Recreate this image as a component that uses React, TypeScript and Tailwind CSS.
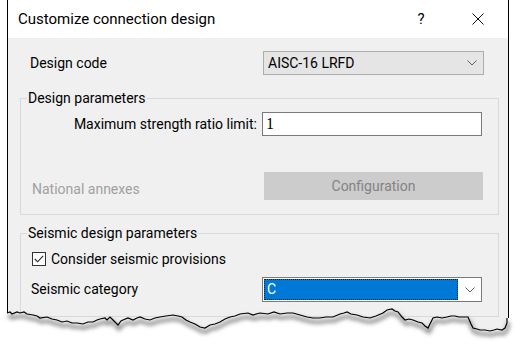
const font = { fontFamily: 'Roboto, "Noto Sans", sans-serif' };

const edge =
  "7,313 10,312 12,314 17,312 20,313 24,312 27,314 33,315 37,316 40,318 47,317 52,319 57,320 62,322 67,321 72,323 77,323 83,324 88,322 93,322 97,320 100,319 105,318 107,320 110,317 113,320 115,322 118,325 121,321 123,320 128,318 133,320 137,318 140,317 145,319 150,320 155,318 160,317 166,316 173,315 178,316 182,317 186,320 190,322 195,324 200,327 205,328 210,325 215,324 220,322 225,319 230,317 235,316 240,314 248,313 253,315 260,313 268,314 274,312 280,314 287,313 293,313 300,315 307,317 313,318 320,318 326,317 333,317 340,314 344,313 347,312 351,314 357,315 363,317 370,318 376,316 383,313 387,310 392,309 395,311 398,312 402,317 405,320 409,319 413,320 418,322 422,323 425,326 428,328 431,322 433,318 437,317 442,318 447,317 451,316 455,316 459,317 463,317 468,317 471,324 473,328 477,329 480,330 485,330 490,331 494,330 497,329 502,330 505,328 507,323 507,318";

function Chevron() {
  return (
    <svg width="10" height="6" viewBox="0 0 10 6" className="shrink-0">
      <polyline points="0.5,0.5 5,5 9.5,0.5" fill="none" stroke="#606060" strokeWidth="1" />
    </svg>
  );
}

export default function App() {
  return (
    <div className="relative w-[517px] h-[355px] bg-white overflow-hidden text-black" style={font}>
      <div className="ml-[7px] w-[502px] h-[345px] border-x border-black bg-[#f0f0f0] flex flex-col">
        {/* title bar */}
        <div className="h-[38px] bg-white flex items-center pl-[10px] text-[15px] shrink-0">
          <span className="flex-1">Customize connection design</span>
          <span className="w-[20px] text-center mr-[41px] text-[15px]">?</span>
          <svg width="12" height="12" viewBox="0 0 12 12" className="mr-[24px]">
            <path d="M0.5 0.5 L11.5 11.5 M11.5 0.5 L0.5 11.5" stroke="#111" strokeWidth="1" />
          </svg>
        </div>

        <div className="pl-[12px] pr-[9px] text-[14px] flex flex-col">
          {/* design code */}
          <div className="mt-[13px] h-[24px] flex items-center">
            <span className="flex-1 pl-[10px]">Design code</span>
            <div className="w-[221px] h-[24px] mr-[15px] bg-[#e5e5e5] border border-[#adadad] flex items-center pl-[4px] pr-[6px]">
              <span className="flex-1">AISC-16 LRFD</span>
              <Chevron />
            </div>
          </div>

          {/* design parameters */}
          <fieldset className="mt-[13px] border border-[#d9d9d9] pb-[14px]">
            <legend className="ml-[6px] px-[1px] leading-[20px]">Design parameters</legend>
            <div className="mt-[4px] h-[24px] flex items-center">
              <span className="w-[241px] text-right pr-[5px]">Maximum strength ratio limit:</span>
              <div className="w-[220px] h-[24px] bg-white border border-[#7a7a7a] flex items-center pl-[3px] text-[16px]" style={{ fontFamily: '"Liberation Serif", serif' }}>
                1
              </div>
            </div>
            <div className="mt-[36px] h-[28px] flex items-center">
              <span className="flex-1 pl-[11px] pt-[6px] text-[#a0a0a0]">National annexes</span>
              <div className="w-[219px] h-[28px] mr-[15px] bg-[#cccccc] text-[#838383] flex items-center justify-center">
                Configuration
              </div>
            </div>
          </fieldset>

          {/* seismic */}
          <fieldset className="mt-[8px] border border-[#d9d9d9] pb-[14px]">
            <legend className="ml-[6px] px-[1px] leading-[20px]">Seismic design parameters</legend>
            <div className="mt-[6px] h-[20px] flex items-center pl-[11px]">
              <div className="w-[14px] h-[14px] bg-white border border-[#333] flex items-center justify-center mr-[5px]">
                <svg width="10" height="8" viewBox="0 0 10 8">
                  <polyline points="0.8,4 3.6,6.8 9.2,0.8" fill="none" stroke="#222" strokeWidth="1.1" />
                </svg>
              </div>
              <span>Consider seismic provisions</span>
            </div>
            <div className="mt-[8px] h-[25px] flex items-center">
              <span className="flex-1 pl-[10px]">Seismic category</span>
              <div className="w-[220px] h-[25px] mr-[16px] bg-white border border-[#7a7a7a] flex items-center p-[1px]">
                <div className="w-[194px] h-full bg-[#0078d7] border border-dotted border-[#1b1b1b] text-white flex items-center pl-[2px]">
                  C
                </div>
                <div className="flex-1 flex justify-center pl-[2px]">
                  <Chevron />
                </div>
              </div>
            </div>
          </fieldset>
        </div>
      </div>

      {/* torn bottom edge */}
      <svg className="absolute left-0 top-[290px]" width="517" height="65" viewBox="0 290 517 65">
        <defs>
          <filter id="blur" x="-10%" y="-50%" width="120%" height="200%">
            <feGaussianBlur stdDeviation="2" />
          </filter>
        </defs>
        <polygon points={`0,313 ${edge} 517,318 517,355 0,355`} fill="#ffffff" />
        <polyline points={edge} fill="none" stroke="#7a7a7a" strokeWidth="3" transform="translate(1,4)" filter="url(#blur)" />
        <polyline points={edge} fill="none" stroke="#000" strokeWidth="1.2" />
      </svg>
    </div>
  );
}
